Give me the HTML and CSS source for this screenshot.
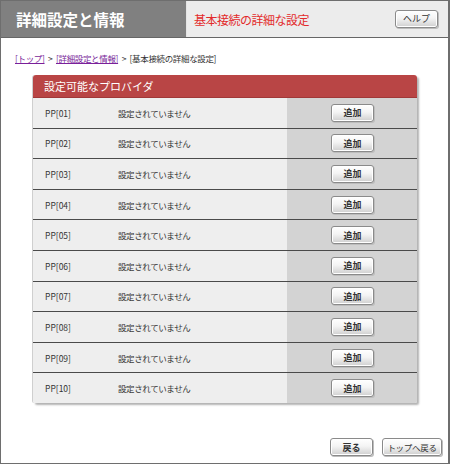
FILE: index.html
```html
<!DOCTYPE html>
<html lang="ja">
<head>
<meta charset="utf-8">
<link rel="stylesheet" href="styles.css">
</head>
<body>
<div class="page">
  <div class="header">
    <div class="title">詳細設定と情報</div>
    <div class="sub">
      <span class="subtitle">基本接続の詳細な設定</span>
      <span class="btn help">ヘルプ</span>
    </div>
  </div>
  <div class="crumbs"><a class="link">[トップ]</a> &gt; <a class="link">[詳細設定と情報]</a> &gt; [基本接続の詳細な設定]</div>
  <div class="panel">
    <div class="panel-head">設定可能なプロバイダ</div>
    <div class="row"><div class="info"><span class="pp">PP[01]</span><span class="state">設定されていません</span></div><div class="act"><span class="btn">追加</span></div></div>
    <div class="row"><div class="info"><span class="pp">PP[02]</span><span class="state">設定されていません</span></div><div class="act"><span class="btn">追加</span></div></div>
    <div class="row"><div class="info"><span class="pp">PP[03]</span><span class="state">設定されていません</span></div><div class="act"><span class="btn">追加</span></div></div>
    <div class="row"><div class="info"><span class="pp">PP[04]</span><span class="state">設定されていません</span></div><div class="act"><span class="btn">追加</span></div></div>
    <div class="row"><div class="info"><span class="pp">PP[05]</span><span class="state">設定されていません</span></div><div class="act"><span class="btn">追加</span></div></div>
    <div class="row"><div class="info"><span class="pp">PP[06]</span><span class="state">設定されていません</span></div><div class="act"><span class="btn">追加</span></div></div>
    <div class="row"><div class="info"><span class="pp">PP[07]</span><span class="state">設定されていません</span></div><div class="act"><span class="btn">追加</span></div></div>
    <div class="row"><div class="info"><span class="pp">PP[08]</span><span class="state">設定されていません</span></div><div class="act"><span class="btn">追加</span></div></div>
    <div class="row"><div class="info"><span class="pp">PP[09]</span><span class="state">設定されていません</span></div><div class="act"><span class="btn">追加</span></div></div>
    <div class="row"><div class="info"><span class="pp">PP[10]</span><span class="state">設定されていません</span></div><div class="act"><span class="btn">追加</span></div></div>
  </div>
  <div class="footer">
    <span class="btn back">戻る</span>
    <span class="btn top">トップへ戻る</span>
  </div>
</div>
</body>
</html>
```
FILE: styles.css
```css
* { box-sizing: border-box; }
html, body { margin: 0; padding: 0; background: #fff; }
body {
  font-family: "Noto Sans CJK JP", "Liberation Sans", sans-serif;
  color: #222;
}
.page {
  width: 450px;
  height: 464px;
  border: 1px solid #6e6e6e;
  border-right-width: 2px;
  display: flex;
  flex-direction: column;
}
.header {
  height: 37px;
  display: flex;
  border-bottom: 1px solid #666;
}
.title {
  width: 185px;
  background: #808080;
  color: #fff;
  font-size: 15.5px;
  font-weight: bold;
  line-height: 36px;
  padding-left: 15px;
}
.sub {
  flex: 1;
  background: #ececec;
  display: flex;
  align-items: center;
  justify-content: space-between;
  padding: 0 10px 0 7px;
  border-left: 1px solid #e4e4e4;
}
.subtitle {
  color: #e32b2b;
  font-size: 12px;
  letter-spacing: -0.5px;
}
.btn {
  display: inline-flex;
  align-items: center;
  justify-content: center;
  height: 18px;
  width: 43px;
  border: 1px solid #8a8a8a;
  border-radius: 3px;
  background: linear-gradient(#ffffff 0%, #f4f4f4 45%, #cfcfcf 100%);
  box-shadow: inset 0 0 0 1px #fff, 1px 1px 0 #bdbdbd;
  font-size: 9px;
  font-weight: bold;
  color: #333;
  white-space: nowrap;
}
.help { margin-bottom: 1px; font-weight: normal; }
.crumbs {
  font-size: 8.5px;
  letter-spacing: -0.35px;
  word-spacing: 2px;
  padding-left: 14px;
  margin-top: 13px;
  height: 14px;
  line-height: 14px;
  color: #333;
  white-space: nowrap;
}
.link {
  color: #7a1f9a;
  text-decoration: underline;
}
.panel {
  margin-left: 32px;
  margin-top: 10px;
  width: 384px;
  border-radius: 3px 3px 2px 2px;
  box-shadow: 2px 2px 2px #b3b3b3, -1px 0 0 #cfcfcf;
  overflow: hidden;
}
.panel-head {
  height: 23px;
  background: #b94545;
  color: #fff;
  font-size: 11px;
  line-height: 23px;
  padding-left: 11px;
  border-bottom: 1px solid #a03838;
}
.row {
  display: flex;
  height: 30.6px;
  border-top: 1px solid #4a4a4a;
}
.panel-head + .row { border-top: none; height: 29.6px; }
.info {
  width: 254px;
  background: #eeeeee;
  display: flex;
  align-items: center;
  font-size: 8.5px;
  letter-spacing: -0.4px;
  color: #333;
  padding-left: 12px;
}
.pp { width: 73px; letter-spacing: 0; }
.act {
  flex: 1;
  background: #d3d3d3;
  display: flex;
  align-items: center;
  justify-content: center;
  padding-left: 1px;
}
.footer {
  margin-top: auto;
  display: flex;
  justify-content: flex-end;
  gap: 9px;
  padding: 0 6px 7px 0;
}
.top { width: 60px; font-weight: normal; font-size: 8.5px; letter-spacing: -0.3px; }
.back { width: 43px; }
```
